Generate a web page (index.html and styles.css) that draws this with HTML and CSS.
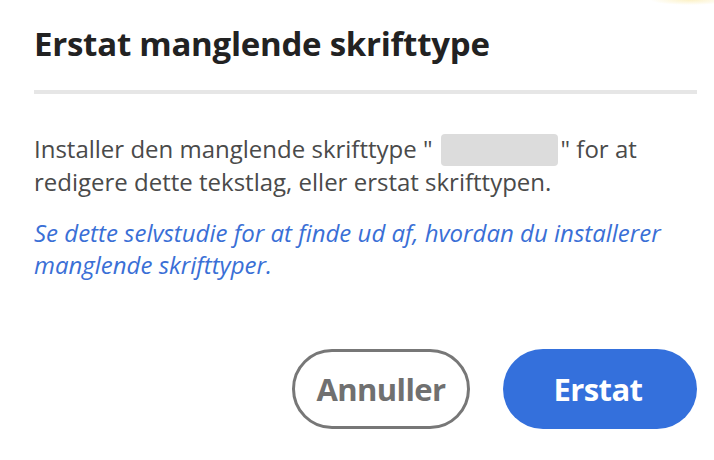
FILE: index.html
```html
<!DOCTYPE html>
<html lang="da">
<head>
<meta charset="utf-8">
<title>Erstat manglende skrifttype</title>
<link rel="stylesheet" href="styles.css">
</head>
<body>
<div class="dialog">
  <h1 class="title">Erstat manglende skrifttype</h1>
  <hr class="divider">
  <p class="message">Installer den manglende skrifttype "<span class="font-name"></span>" for at redigere dette tekstlag, eller erstat skrifttypen.</p>
  <a class="help-link" href="#">Se dette selvstudie for at finde ud af, hvordan du installerer manglende skrifttyper.</a>
  <div class="actions">
    <button class="btn btn-secondary">Annuller</button>
    <button class="btn btn-primary">Erstat</button>
  </div>
</div>
</body>
</html>
```
FILE: styles.css
```css
html, body {
  margin: 0;
  padding: 0;
  background: #ffffff;
}
body {
  width: 714px;
  height: 460px;
  overflow: hidden;
  font-family: "Open Sans", "Lato", sans-serif;
  background:
    radial-gradient(ellipse 40px 5px at 690px 0px, rgba(250, 232, 160, 0.6), rgba(255, 255, 255, 0) 100%),
    #ffffff;
}
.dialog {
  display: flex;
  flex-direction: column;
  padding: 22px 17px 0 34px;
}
.title {
  margin: 0;
  font-size: 33px;
  line-height: 44px;
  font-weight: 700;
  color: #222222;
  letter-spacing: -0.25px;
}
.divider {
  margin: 24px 0 0 0;
  border: 0;
  height: 4px;
  background: #e6e6e6;
}
.message {
  margin: 39px 0 0 0;
  font-size: 24px;
  line-height: 32px;
  color: #4a4a4a;
}
.font-name {
  display: inline-block;
  width: 117px;
  height: 32px;
  vertical-align: -8px;
  background: #dcdcdc;
  border-radius: 4px;
  margin: 0 3px 0 8px;
}
.help-link {
  margin-top: 19px;
  font-size: 24px;
  line-height: 32px;
  font-style: italic;
  color: #3a6fd6;
  text-decoration: none;
}
.actions {
  display: flex;
  justify-content: flex-end;
  gap: 33px;
  margin-top: 68px;
}
.btn {
  height: 80px;
  border-radius: 40px;
  font-family: "Open Sans", "Lato", sans-serif;
  font-size: 31px;
  font-weight: 700;
  letter-spacing: -0.6px;
  cursor: pointer;
}
.btn-secondary {
  width: 178px;
  background: #ffffff;
  border: 3px solid #777777;
  color: #707070;
}
.btn-primary {
  width: 194px;
  padding-right: 10px;
  background: #3470dc;
  border: 0;
  color: #ffffff;
}
```
